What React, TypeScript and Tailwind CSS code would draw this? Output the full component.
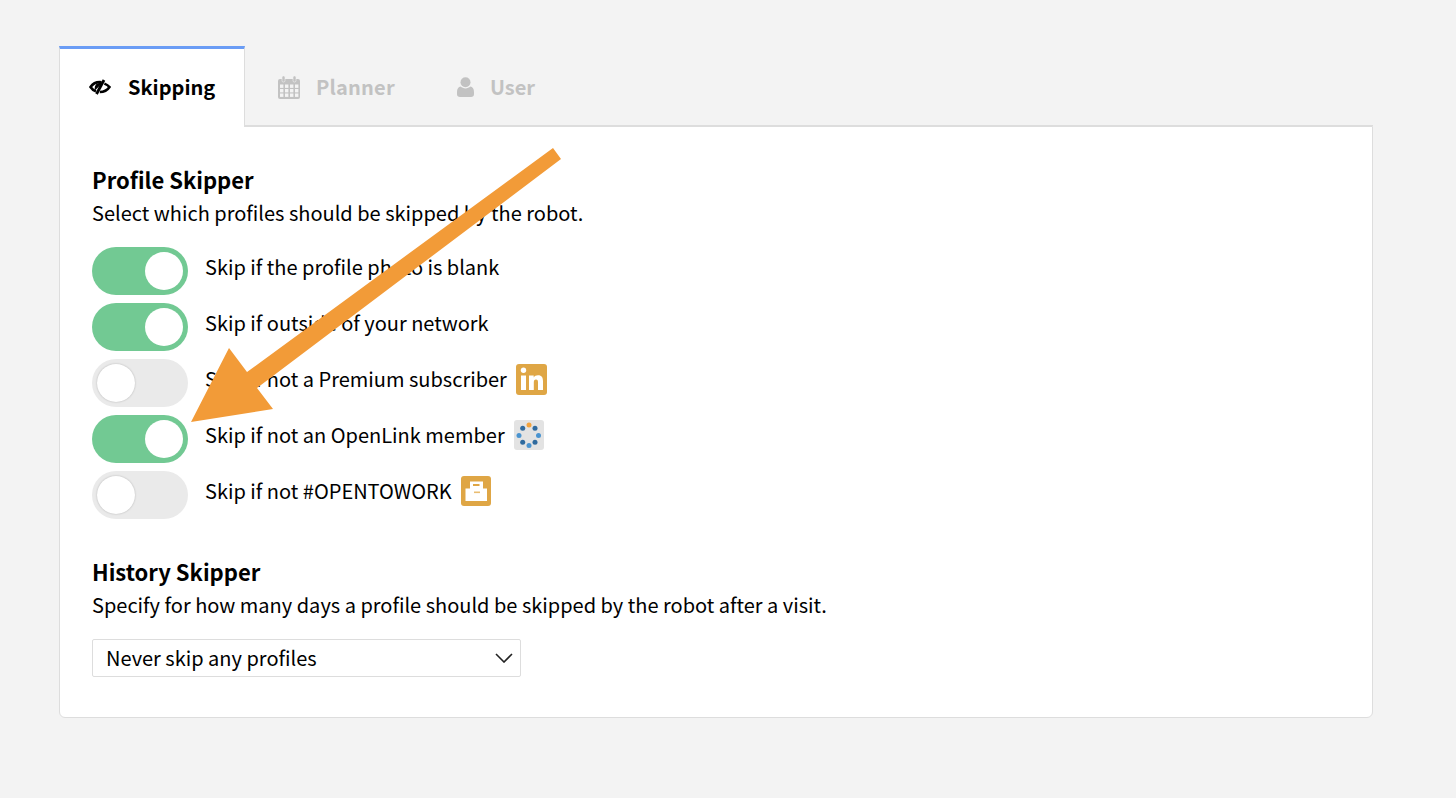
import React from 'react';

const font = 'font-["Noto_Sans_CJK_SC","Liberation_Sans",sans-serif]';

const EyeIcon = () => (
  <svg width="22" height="16" viewBox="0 0 22 16" fill="none" stroke="#000" className="shrink-0">
    <path d="M12.500 3.200C7.800 2.600 3.600 5 1.500 8c1.400 2.100 3.300 3.600 5.400 4.400" strokeWidth="2.600" />
    <path d="M15 1L7.500 15" strokeWidth="2.800" />
    <path d="M12 4.500C8.300 4.500 6.300 6.700 6.300 10L12 4.500z" fill="#000" strokeWidth="1.400" />
    <path d="M15.400 4.600c2 .8 3.800 1.900 5.100 3.400-2 3-5.600 5-9.700 5" strokeWidth="2.600" />
  </svg>
);

const CalendarIcon = () => (
  <svg width="22" height="23" viewBox="0 0 22 23" className="shrink-0" fill="#c2c2c2">
    <rect x="0" y="3" width="22" height="20" rx="2" />
    <rect x="4" y="0" width="3" height="6" rx="1.400" stroke="#f3f3f3" strokeWidth="0.600" />
    <rect x="15" y="0" width="3" height="6" rx="1.400" stroke="#f3f3f3" strokeWidth="0.600" />
    {[8.500, 13, 17.500].map((y) =>
      [2, 7, 12, 17].map((x) => <rect key={`${x}-${y}`} x={x} y={y} width="3.400" height="3.400" fill="#f3f3f3" />),
    )}
  </svg>
);

const UserIcon = () => (
  <svg width="17" height="20" viewBox="0 0 17 20" className="shrink-0" fill="#c2c2c2">
    <circle cx="8.500" cy="5.200" r="5" />
    <path d="M3.600 9.600c1.200 1.200 3 1.800 4.900 1.800s3.700-.6 4.900-1.800c2.200.4 3.600 2.200 3.600 5.400v2.200c0 1.700-1.200 2.800-3 2.800H3c-1.800 0-3-1.100-3-2.800V15c0-3.200 1.400-5 3.600-5.400z" />
  </svg>
);

const Toggle: React.FC<{ on: boolean }> = ({ on }) => (
  <span
    className={`flex h-12 w-24 shrink-0 rounded-full p-[5px] ${
      on ? 'justify-end bg-[#72c993]' : 'justify-start bg-[#eaeaea]'
    }`}
  >
    <span className={`size-[38px] rounded-full bg-white ${on ? '' : 'shadow-[0_0_2px_rgba(0,0,0,0.25)]'}`} />
  </span>
);

const LinkedinBadge = () => (
  <span className="ml-[9px] flex size-[31px] rounded-[3px] bg-[#dfa645]">
    <svg width="31" height="31" viewBox="0 0 31 31" fill="#fff">
      <circle cx="7.500" cy="6.200" r="2.700" />
      <rect x="5" y="11.500" width="5" height="14.500" />
      <path d="M13 11.500h4.700v2c.8-1.400 2.300-2.300 4.300-2.300 4 0 5 2.600 5 6V26h-5v-7.500c0-1.800-.4-3-2-3s-2.200 1.200-2.200 3V26H13z" />
    </svg>
  </span>
);

const OpenLinkBadge = () => {
  const dots = [
    [15, 5, '#f2a23c'],
    [21, 8.300, '#2f6a9e'],
    [24.500, 15.500, '#4a94d0'],
    [21, 22.300, '#2f6a9e'],
    [15, 25.500, '#4a94d0'],
    [8.700, 22.300, '#2f6a9e'],
    [5, 15.500, '#4a94d0'],
    [8.700, 8.300, '#2f6a9e'],
  ] as const;
  return (
    <span className="ml-[9px] flex size-[30px] rounded-[3px] bg-[#e3e3e3]">
      <svg width="30" height="30" viewBox="0 0 30 30">
        {dots.map(([cx, cy, fill]) => (
          <circle key={`${cx}-${cy}`} cx={cx} cy={cy} r="2.500" fill={fill} />
        ))}
      </svg>
    </span>
  );
};

const BriefcaseBadge = () => (
  <span className="ml-[9px] flex size-[30px] rounded-[3px] bg-[#dfa645]">
    <svg width="30" height="30" viewBox="0 0 30 30">
      <path d="M9 5.500h13v7h4v12.500H4.500V12.500H9z" fill="#fff" />
      <rect x="12" y="8" width="6.500" height="2" fill="#dfa645" />
      <rect x="13" y="15.500" width="6" height="1.600" fill="#e9bd72" />
    </svg>
  </span>
);

const rows: { label: string; on: boolean; badge?: React.ReactNode }[] = [
  { label: 'Skip if the profile photo is blank', on: true },
  { label: 'Skip if outside of your network', on: true },
  { label: 'Skip if not a Premium subscriber', on: false, badge: <LinkedinBadge /> },
  { label: 'Skip if not an OpenLink member', on: true, badge: <OpenLinkBadge /> },
  { label: 'Skip if not #OPENTOWORK', on: false, badge: <BriefcaseBadge /> },
];

export default function App() {
  return (
    <div className={`relative min-h-[798px] bg-[#f3f3f3] px-[59px] pt-[46px] text-black ${font}`}>
      <div className="relative z-10 flex h-[81px] w-[1314px]">
        <div className="flex h-[81px] w-[186px] items-center gap-[17px] border-t-[3px] border-r border-l border-t-[#6a9cf5] border-r-[#dddddd] border-l-[#dddddd] bg-white pb-[2px] pl-[29px] text-[20px] leading-none font-bold">
          <EyeIcon />
          <span>Skipping</span>
        </div>
        <div className="flex h-[80px] flex-1 items-center border-b border-[#dddddd] pt-[3px] pl-[33px] text-[20px] leading-none font-bold text-[#c2c2c2]">
          <CalendarIcon />
          <span className="ml-[16px] w-[78px] tracking-[0.2px]">Planner</span>
          <span className="ml-[63px]">
            <UserIcon />
          </span>
          <span className="ml-[16px]">User</span>
        </div>
      </div>
      <div className="-mt-px h-[592px] w-[1314px] rounded-b-md border border-[#dddddd] bg-white px-[32px] pt-[36px]">
        <h2 className="text-[22px] leading-[32px] font-bold">Profile Skipper</h2>
        <p className="mt-[2px] text-[20px] leading-[32px]">Select which profiles should be skipped by the robot.</p>
        <div className="mt-[18px] flex flex-col gap-2">
          {rows.map((r) => (
            <div key={r.label} className="flex h-12 items-center gap-[17px] text-[20px]">
              <Toggle on={r.on} />
              <span className="flex items-center pb-[8px]">
                {r.label}
                {r.badge}
              </span>
            </div>
          ))}
        </div>
        <h2 className="mt-[36px] text-[22px] leading-[32px] font-bold">History Skipper</h2>
        <p className="mt-[2px] text-[20px] leading-[32px]">
          Specify for how many days a profile should be skipped by the robot after a visit.
        </p>
        <div className="mt-[18px] flex h-[38px] w-[429px] items-center justify-between rounded-[2px] border border-[#dddddd] pr-[7px] pl-[13px] text-[20px]">
          <span>Never skip any profiles</span>
          <svg width="18" height="10" viewBox="0 0 18 10" fill="none" stroke="#222" strokeWidth="1.600">
            <path d="M1 1l8 8 8-8" />
          </svg>
        </div>
      </div>
      {/* arrow lies over the content */}
      <svg className="pointer-events-none absolute top-0 left-0 z-20" width="1456" height="798" viewBox="0 0 1456 798">
        <polygon points="553,148 561,159 257,388 273,409 191,422 229,348 247,372" fill="#f29b38" />
      </svg>
    </div>
  );
}
